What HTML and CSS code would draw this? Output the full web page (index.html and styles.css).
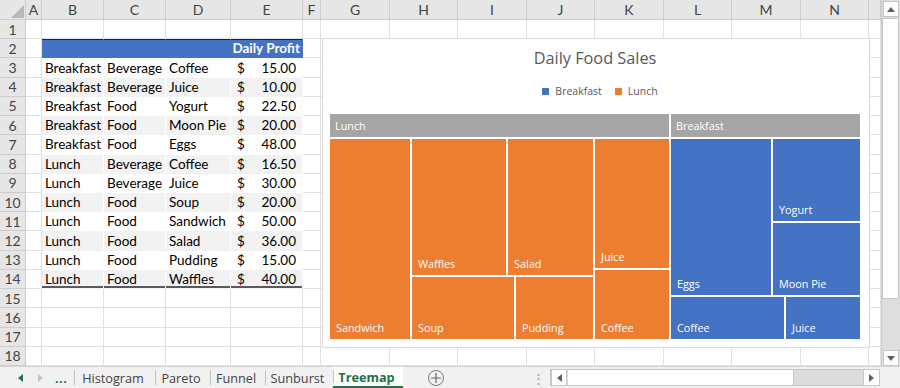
FILE: index.html
```html
<!DOCTYPE html>
<html lang="en">
<head>
    <title>Treemap</title>
    <meta charset="UTF-8">
    <meta name="viewport" content="width=device-width, initial-scale=1.0">
    <link rel="stylesheet" href="styles.css">
</head>

<body>
<div class="window">
    <div class="workspace">
        <div class="sheet">
            <div class="grid">
                <div class="corner"><svg width="26" height="20" viewBox="0 0 26 20"><path d="M24 5V18H11Z" fill="#b9b9b9"/></svg></div><div class="ch">A</div><div class="ch">B</div><div class="ch">C</div><div class="ch">D</div><div class="ch">E</div><div class="ch">F</div><div class="ch">G</div><div class="ch">H</div><div class="ch">I</div><div class="ch">J</div><div class="ch">K</div><div class="ch">L</div><div class="ch">M</div><div class="ch">N</div><div class="ch"></div>

                <div class="rh">1</div><div></div><div></div><div></div><div></div><div></div><div></div><div></div><div></div><div></div><div></div><div></div><div></div><div></div><div></div><div></div>
                <div class="rh">2</div><div></div><div class="hd"></div><div class="hd"></div><div class="hd"></div><div class="hd hd-e">Daily Profit</div><div></div><div></div><div></div><div></div><div></div><div></div><div></div><div></div><div></div><div></div>
                <div class="rh">3</div><div></div><div class="c">Breakfast</div><div class="c">Beverage</div><div class="c">Coffee</div><div class="c amt"><span>$</span><span>15.00</span></div><div></div><div></div><div></div><div></div><div></div><div></div><div></div><div></div><div></div><div></div>
                <div class="rh">4</div><div></div><div class="c alt">Breakfast</div><div class="c alt">Beverage</div><div class="c alt">Juice</div><div class="c alt amt"><span>$</span><span>10.00</span></div><div></div><div></div><div></div><div></div><div></div><div></div><div></div><div></div><div></div><div></div>
                <div class="rh">5</div><div></div><div class="c">Breakfast</div><div class="c">Food</div><div class="c">Yogurt</div><div class="c amt"><span>$</span><span>22.50</span></div><div></div><div></div><div></div><div></div><div></div><div></div><div></div><div></div><div></div><div></div>
                <div class="rh">6</div><div></div><div class="c alt">Breakfast</div><div class="c alt">Food</div><div class="c alt">Moon Pie</div><div class="c alt amt"><span>$</span><span>20.00</span></div><div></div><div></div><div></div><div></div><div></div><div></div><div></div><div></div><div></div><div></div>
                <div class="rh">7</div><div></div><div class="c">Breakfast</div><div class="c">Food</div><div class="c">Eggs</div><div class="c amt"><span>$</span><span>48.00</span></div><div></div><div></div><div></div><div></div><div></div><div></div><div></div><div></div><div></div><div></div>
                <div class="rh">8</div><div></div><div class="c alt">Lunch</div><div class="c alt">Beverage</div><div class="c alt">Coffee</div><div class="c alt amt"><span>$</span><span>16.50</span></div><div></div><div></div><div></div><div></div><div></div><div></div><div></div><div></div><div></div><div></div>
                <div class="rh">9</div><div></div><div class="c">Lunch</div><div class="c">Beverage</div><div class="c">Juice</div><div class="c amt"><span>$</span><span>30.00</span></div><div></div><div></div><div></div><div></div><div></div><div></div><div></div><div></div><div></div><div></div>
                <div class="rh">10</div><div></div><div class="c alt">Lunch</div><div class="c alt">Food</div><div class="c alt">Soup</div><div class="c alt amt"><span>$</span><span>20.00</span></div><div></div><div></div><div></div><div></div><div></div><div></div><div></div><div></div><div></div><div></div>
                <div class="rh">11</div><div></div><div class="c">Lunch</div><div class="c">Food</div><div class="c">Sandwich</div><div class="c amt"><span>$</span><span>50.00</span></div><div></div><div></div><div></div><div></div><div></div><div></div><div></div><div></div><div></div><div></div>
                <div class="rh">12</div><div></div><div class="c alt">Lunch</div><div class="c alt">Food</div><div class="c alt">Salad</div><div class="c alt amt"><span>$</span><span>36.00</span></div><div></div><div></div><div></div><div></div><div></div><div></div><div></div><div></div><div></div><div></div>
                <div class="rh">13</div><div></div><div class="c">Lunch</div><div class="c">Food</div><div class="c">Pudding</div><div class="c amt"><span>$</span><span>15.00</span></div><div></div><div></div><div></div><div></div><div></div><div></div><div></div><div></div><div></div><div></div>
                <div class="rh">14</div><div></div><div class="c alt last">Lunch</div><div class="c alt last">Food</div><div class="c alt last">Waffles</div><div class="c alt last amt"><span>$</span><span>40.00</span></div><div></div><div></div><div></div><div></div><div></div><div></div><div></div><div></div><div></div><div></div>
                <div class="rh">15</div><div></div><div></div><div></div><div></div><div></div><div></div><div></div><div></div><div></div><div></div><div></div><div></div><div></div><div></div><div></div>
                <div class="rh">16</div><div></div><div></div><div></div><div></div><div></div><div></div><div></div><div></div><div></div><div></div><div></div><div></div><div></div><div></div><div></div>
                <div class="rh">17</div><div></div><div></div><div></div><div></div><div></div><div></div><div></div><div></div><div></div><div></div><div></div><div></div><div></div><div></div><div></div>
                <div class="rh">18</div><div></div><div></div><div></div><div></div><div></div><div></div><div></div><div></div><div></div><div></div><div></div><div></div><div></div><div></div><div></div>
            </div>

            <!-- chart object floats over the cells -->
            <div class="chart">
                <div class="chart-title">Daily Food Sales</div>
                <div class="legend">
                    <span class="key"><i class="sw blue"></i>Breakfast</span>
                    <span class="key"><i class="sw orange"></i>Lunch</span>
                </div>
                <div class="plot">
                    <div class="group lunch">
                        <div class="group-head">Lunch</div>
                        <div class="row body">
                            <div class="tile" style="width:80px">Sandwich</div>
                            <div class="row grow">
                                <div class="col" style="width:181px">
                                    <div class="row" style="height:136px">
                                        <div class="tile" style="width:94px">Waffles</div>
                                        <div class="tile grow">Salad</div>
                                    </div>
                                    <div class="row grow">
                                        <div class="tile" style="width:102px">Soup</div>
                                        <div class="tile grow">Pudding</div>
                                    </div>
                                </div>
                                <div class="col grow">
                                    <div class="tile" style="height:129px">Juice</div>
                                    <div class="tile grow">Coffee</div>
                                </div>
                            </div>
                        </div>
                    </div>
                    <div class="group breakfast">
                        <div class="group-head">Breakfast</div>
                        <div class="col body">
                            <div class="row" style="height:156px">
                                <div class="tile" style="width:100px">Eggs</div>
                                <div class="col grow">
                                    <div class="tile" style="height:82px">Yogurt</div>
                                    <div class="tile grow">Moon Pie</div>
                                </div>
                            </div>
                            <div class="row grow">
                                <div class="tile" style="width:113px">Coffee</div>
                                <div class="tile grow">Juice</div>
                            </div>
                        </div>
                    </div>
                </div>
            </div>
        </div>

        <div class="vscroll">
            <div class="sbtn"><svg width="8" height="5" viewBox="0 0 8 5"><path d="M0 5L4 0L8 5Z" fill="#606060"/></svg></div>
            <div class="vthumb"></div>
            <div class="grow"></div>
            <div class="sbtn"><svg width="8" height="5" viewBox="0 0 8 5"><path d="M0 0L4 5L8 0Z" fill="#606060"/></svg></div>
        </div>
    </div>

    <div class="tabbar">
        <div class="nav">
            <svg class="nav-prev" width="5" height="8" viewBox="0 0 5 8"><path d="M5 0V8L0 4Z" fill="#217346"/></svg>
            <svg class="nav-next" width="5" height="8" viewBox="0 0 5 8"><path d="M0 0V8L5 4Z" fill="#c4c4c4"/></svg>
            <span class="more">...</span>
        </div>
        <div class="tab" style="width:81px">Histogram</div>
        <div class="tab" style="width:55px">Pareto</div>
        <div class="tab" style="width:55px">Funnel</div>
        <div class="tab" style="width:68px">Sunburst</div>
        <div class="tab on" style="width:70px">Treemap</div>
        <div class="add"><svg width="10" height="10" viewBox="0 0 10 10"><path d="M5 0V10M0 5H10" stroke="#666" stroke-width="1.2"/></svg></div>
        <div class="grip">&#8942;</div>
        <div class="hscroll">
            <div class="sbtn"><svg width="5" height="8" viewBox="0 0 5 8"><path d="M5 0V8L0 4Z" fill="#606060"/></svg></div>
            <div class="hthumb"></div>
            <div class="grow"></div>
            <div class="sbtn"><svg width="5" height="8" viewBox="0 0 5 8"><path d="M0 0V8L5 4Z" fill="#606060"/></svg></div>
        </div>
    </div>
</div>
</body>
</html>
```

FILE: styles.css
```css
* {
    box-sizing: border-box;
}

body {
    margin: 0;
    background: #e6e6e6;
    font-family: Lato, "Liberation Sans", sans-serif;
}

.window {
    width: 900px;
    height: 388px;
    display: flex;
    flex-direction: column;
    overflow: hidden;
}

.workspace {
    display: flex;
    height: 366px;
}

.grow {
    flex: 1;
}

/* ---- sheet grid ---- */

.sheet {
    position: relative;
    width: 881px;
    height: 366px;
    background: #fff;
}

.grid {
    display: grid;
    height: 100%;
    grid-template-columns: 26px 16px 62px 62px 65px 72px 18px 69px 68px 69px 68px 69px 68px 69px 68px 12px;
    grid-template-rows: 20px repeat(18, 1fr);
    font-size: 13.5px;
    color: #000;
}

.grid > div {
    border-right: 1px solid #e1e1e1;
    border-bottom: 1px solid #e1e1e1;
    min-width: 0;
}

.grid > .corner,
.grid > .ch,
.grid > .rh {
    background: #e6e6e6;
    border-color: #cdcdcd;
    color: #444;
    font-size: 14px;
}

.corner svg {
    display: block;
}

.ch {
    text-align: center;
    line-height: 19px;
}

.rh {
    display: flex;
    align-items: center;
    justify-content: center;
}

.grid > .c {
    display: flex;
    align-items: center;
    padding: 0 3px;
    white-space: nowrap;
    border-right-color: #fff;
    border-bottom-color: #fff;
}

.grid > .alt {
    background: #f2f2f2;
    border-bottom-color: #f2f2f2;
}

.grid > .amt {
    justify-content: space-between;
    padding: 0 6px;
}

.grid > .hd {
    background: #4472c4;
    border-right-color: #4472c4;
    border-bottom-color: #4472c4;
    box-shadow: inset 0 1px 0 #222;
}

.hd-e {
    display: flex;
    align-items: center;
    justify-content: flex-end;
    padding-right: 2px;
    color: #fff;
    font-weight: 700;
    white-space: nowrap;
}

.grid > .last {
    box-shadow: inset 0 -2px 0 #5a5a5a;
}

/* ---- chart ---- */

.chart {
    position: absolute;
    left: 322px;
    top: 38px;
    width: 548px;
    height: 310px;
    display: flex;
    flex-direction: column;
    align-items: center;
    padding: 0 9px 7px 7px;
    background: #fff;
    border: 1px solid #d9d9d9;
    font-family: "Open Sans", sans-serif;
    color: #595959;
}

.chart-title {
    margin-top: 8px;
    font-size: 16.3px;
    line-height: 22px;
}

.legend {
    display: flex;
    gap: 13px;
    margin: 15px 0 0 10px;
    font-size: 10.5px;
    line-height: 14px;
}

.key {
    display: flex;
    align-items: center;
}

.sw {
    width: 7px;
    height: 7px;
    margin-right: 6px;
}

.blue {
    background: #4472c4;
}

.orange {
    background: #ed7d31;
}

.plot {
    align-self: stretch;
    display: flex;
    gap: 2px;
    height: 225px;
    margin-top: 16px;
    font-size: 10.8px;
    color: #fff;
}

.group {
    display: flex;
    flex-direction: column;
    gap: 2px;
}

.lunch {
    width: 339px;
}

.breakfast {
    flex: 1;
}

.group-head {
    height: 23px;
    display: flex;
    align-items: center;
    padding-left: 5px;
    background: #a5a5a5;
}

.body {
    flex: 1;
}

.row {
    display: flex;
    gap: 2px;
}

.col {
    display: flex;
    flex-direction: column;
    gap: 2px;
}

.tile {
    display: flex;
    align-items: flex-end;
    padding: 0 0 4px 6px;
    line-height: 14px;
    white-space: nowrap;
}

.lunch .tile {
    background: #ed7d31;
}

.breakfast .tile {
    background: #4472c4;
}

/* ---- scroll bars ---- */

.vscroll {
    width: 19px;
    display: flex;
    flex-direction: column;
    gap: 1px;
    padding: 1px 1px 0 1px;
    background: #dedede;
    border-left: 1px solid #cfcfcf;
}

.sbtn {
    display: flex;
    align-items: center;
    justify-content: center;
    background: #fff;
    border: 1px solid #c6c6c6;
}

.vscroll .sbtn {
    height: 16px;
}

.vthumb {
    height: 281px;
    margin-left: -1px;
    background: #fff;
    border: 1px solid #c6c6c6;
}

/* ---- sheet tabs ---- */

.tabbar {
    height: 22px;
    display: flex;
    align-items: stretch;
    background: #f1f1f1;
    border-top: 1px solid #d4d4d4;
    font-family: "Open Sans", sans-serif;
    font-size: 12.7px;
    color: #444;
}

.nav {
    width: 74px;
    display: flex;
    align-items: center;
}

.nav-prev {
    margin-left: 18px;
}

.nav-next {
    margin-left: 15px;
}

.more {
    margin-left: 12px;
    color: #217346;
    font-weight: 700;
    letter-spacing: 0.5px;
}

.tab {
    position: relative;
    display: flex;
    align-items: center;
    justify-content: center;
    white-space: nowrap;
    padding-right: 3px;
}

.tab::before {
    content: "";
    position: absolute;
    left: 0;
    top: 3px;
    bottom: 3px;
    border-left: 1px solid #c2c2c2;
}

.tab.on {
    background: #fff;
    color: #217346;
    font-weight: 700;
    border-bottom: 2px solid #217346;
    padding-top: 1px;
}

.add {
    width: 16px;
    height: 16px;
    align-self: center;
    margin-left: 25px;
    display: flex;
    align-items: center;
    justify-content: center;
    border: 1px solid #7a7a7a;
    border-radius: 50%;
}

.grip {
    margin-left: auto;
    width: 12px;
    margin-right: 6px;
    display: flex;
    align-items: center;
    justify-content: center;
    color: #9a9a9a;
    font-size: 13px;
}

.hscroll {
    width: 330px;
    height: 17px;
    align-self: center;
    margin-right: 20px;
    display: flex;
    background: #dcdcdc;
    border: 1px solid #c6c6c6;
}

.hscroll .sbtn {
    width: 16px;
    border-width: 0 1px;
}

.hscroll .sbtn:last-child {
    border-right: 0;
}

.hthumb {
    width: 226px;
    margin-left: 1px;
    background: #fff;
    border-right: 1px solid #c6c6c6;
}
```
